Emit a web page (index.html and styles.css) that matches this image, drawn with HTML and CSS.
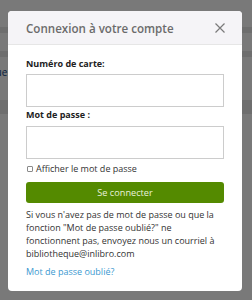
FILE: index.html
```html
<!DOCTYPE html>
<html>
<head lang="fr">
    <meta charset="UTF-8">
    <title>Connexion</title>
    <link rel="stylesheet" href="styles.css">
</head>
<body>
    <div id="page">
        <div class="gap" style="height:27px"></div>
        <div class="band" style="height:6px"></div>
        <div class="gap" style="height:18px"></div>
        <div class="band" style="height:6px"></div>
        <div class="crumb"><a>Bibliothèque</a></div>
        <div class="gap" style="height:21px"></div>
        <div class="band" style="height:14px"></div>
    </div>
    <div id="overlay"></div>
    <div id="modal">
        <div class="modal-header">
            <h3>Connexion à votre compte</h3>
            <a class="close">
                <svg width="10" height="10" viewBox="0 0 10 10">
                    <path d="M0.5 0.5 L9.5 9.5 M9.5 0.5 L0.5 9.5" stroke="#7a7a7a" stroke-width="1.2" fill="none"/>
                </svg>
            </a>
        </div>
        <div class="modal-body">
            <label class="lbl">Numéro de carte:</label>
            <input type="text" class="field">
            <label class="lbl lbl2">Mot de passe :</label>
            <input type="password" class="field">
            <div class="show">
                <input type="checkbox" class="chk">
                <span>Afficher le mot de passe</span>
            </div>
            <button class="btn">Se connecter</button>
            <p class="note">Si vous n'avez pas de mot de passe ou que la fonction "Mot de passe oublié?" ne fonctionnent pas, envoyez nous un courriel à bibliotheque@inlibro.com</p>
            <a class="forgot">Mot de passe oublié?</a>
        </div>
    </div>
</body>
</html>
```
FILE: styles.css
```css
*{
    margin: 0;
    padding: 0;
    box-sizing: border-box;
}
body{
    width: 252px;
    height: 300px;
    overflow: hidden;
    position: relative;
    background: #fff;
    font-family: "Open Sans", "Liberation Sans", sans-serif;
}
#page{
    height: 300px;
    background: #f2f2f2;
}
#page .band{
    background: #dcdcdc;
}
#page .crumb{
    height: 22px;
    padding-top: 8px;
    margin-left: -52px;
    font-size: 10px;
    color: #0b3e7a;
}
#overlay{
    position: absolute;
    left: 0;
    top: 0;
    width: 252px;
    height: 300px;
    background: rgba(0, 0, 0, 0.5);
}
#modal{
    position: absolute;
    left: 8px;
    top: 11px;
    width: 234px;
    height: 280px;
    background: #fff;
    border-radius: 4px;
    overflow: hidden;
}
.modal-header{
    height: 34px;
    background: #f5f4f7;
    border-bottom: 1px solid #e6e6e6;
    display: flex;
    align-items: center;
    justify-content: space-between;
    padding: 0 17px 0 18px;
}
.modal-header h3{
    font-size: 11.6px;
    font-weight: 600;
    color: #6b6b6b;
    padding-top: 1px;
}
.modal-header .close{
    display: flex;
    padding-top: 1px;
}
.modal-body{
    padding: 12px 18px 0 18px;
    font-size: 9px;
    line-height: 13px;
    color: #333;
}
.lbl{
    display: block;
    font-weight: 700;
    color: #222;
    height: 14px;
    margin-bottom: 3px;
}
.lbl2{
    margin-top: 1px;
    margin-bottom: 4px;
}
.field{
    display: block;
    width: 198px;
    height: 33px;
    border: 1px solid #ccc;
    background: #fff;
}
.show{
    display: flex;
    align-items: center;
    height: 14px;
    margin-top: 2px;
}
.chk{
    -webkit-appearance: none;
    appearance: none;
    width: 6px;
    height: 6px;
    border: 1px solid #8a8a8a;
    border-radius: 1px;
    margin: 1px 3px 0 1px;
    background: #fff;
}
.btn{
    display: block;
    width: 198px;
    height: 21px;
    margin-top: 7px;
    border: none;
    border-radius: 3px;
    background: #548a00;
    color: #e9f2dc;
    font-family: inherit;
    font-size: 9.2px;
}
.note{
    margin-top: 6px;
    line-height: 12.9px;
}
.forgot{
    display: block;
    margin-top: 4px;
    color: #3b99d0;
}
```
